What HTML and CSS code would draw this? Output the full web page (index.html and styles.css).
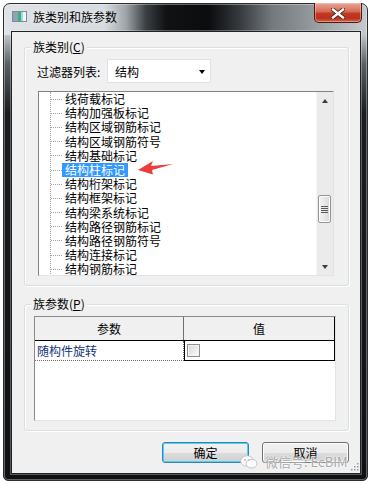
FILE: index.html
```html
<!DOCTYPE html>
<html lang="zh-CN">
<head>
    <meta charset="UTF-8">
    <title>族类别和族参数</title>
    <link rel="stylesheet" href="styles.css">
</head>
<body>
    <div class="window">
        <div class="titlebar">
            <svg class="app-icon" width="15" height="11" viewBox="0 0 15 11">
                <rect x="0.5" y="0.5" width="14" height="10" fill="#f4f6f8" stroke="#7d8c99"/>
                <rect x="1" y="1" width="5" height="9" fill="#8fa3b5"/>
                <rect x="6" y="1" width="3" height="9" fill="#3fae7a"/>
                <rect x="9" y="1" width="2" height="9" fill="#9fd6e8"/>
            </svg>
            <span class="title">族类别和族参数</span>
            <div class="close-btn">
                <svg width="14" height="11" viewBox="0 0 14 11">
                    <path d="M2 1.5 L12 9.5 M12 1.5 L2 9.5" stroke="#4a1a12" stroke-width="4" stroke-linecap="square"/>
                    <path d="M2 1.5 L12 9.5 M12 1.5 L2 9.5" stroke="#ffffff" stroke-width="2.4" stroke-linecap="square"/>
                </svg>
            </div>
        </div>

        <div class="client">
            <div class="group group-category">
                <div class="group-title">族类别(<u>C</u>)</div>

                <div class="filter-row">
                    <span class="filter-label">过滤器列表:</span>
                    <div class="combo">
                        <span>结构</span>
                        <span class="combo-arrow"></span>
                    </div>
                </div>

                <div class="tree">
                    <div class="tree-items">
                        <div class="tree-lines">
                            <div class="node"><span>线荷载标记</span></div>
                            <div class="node"><span>结构加强板标记</span></div>
                            <div class="node"><span>结构区域钢筋标记</span></div>
                            <div class="node"><span>结构区域钢筋符号</span></div>
                            <div class="node"><span>结构基础标记</span></div>
                            <div class="node selected"><span>结构柱标记</span></div>
                            <div class="node"><span>结构桁架标记</span></div>
                            <div class="node"><span>结构框架标记</span></div>
                            <div class="node"><span>结构梁系统标记</span></div>
                            <div class="node"><span>结构路径钢筋标记</span></div>
                            <div class="node"><span>结构路径钢筋符号</span></div>
                            <div class="node"><span>结构连接标记</span></div>
                            <div class="node"><span>结构钢筋标记</span></div>
                        </div>
                    </div>
                    <div class="scrollbar">
                        <div class="scroll-btn"><span class="arrow-up"></span></div>
                        <div class="scroll-track">
                            <div class="scroll-thumb"><span></span><span></span><span></span><span></span></div>
                        </div>
                        <div class="scroll-btn"><span class="arrow-down"></span></div>
                    </div>

                    <!-- annotation arrow -->
                    <svg class="pointer-arrow" width="38" height="17" viewBox="0 0 38 17">
                        <polygon points="1,11 16,2 14,7 36,5 15,11 16,15.5" fill="#ec3d3a"/>
                    </svg>
                </div>
            </div>

            <div class="group group-params">
                <div class="group-title">族参数(<u>P</u>)</div>

                <div class="param-table">
                    <div class="param-row param-head">
                        <div class="cell cell-name">参数</div>
                        <div class="cell cell-value">值</div>
                    </div>
                    <div class="param-row param-item">
                        <div class="cell cell-name">随构件旋转</div>
                        <div class="cell cell-value"><span class="checkbox"></span></div>
                    </div>
                </div>
            </div>

            <div class="dialog-buttons">
                <button class="btn btn-default">确定</button>
                <button class="btn">取消</button>
            </div>

            <div class="watermark">
                <svg width="18" height="14" viewBox="0 0 18 14">
                    <ellipse cx="7" cy="6" rx="6.3" ry="5.2" fill="#ffffff" stroke="#c4c4c4"/>
                    <ellipse cx="11.5" cy="8.6" rx="5.4" ry="4.4" fill="#ffffff" stroke="#c4c4c4"/>
                    <circle cx="5" cy="5" r="0.9" fill="#bdbdbd"/>
                    <circle cx="9" cy="5" r="0.9" fill="#bdbdbd"/>
                </svg>
                <span>微信号: EcBIM</span>
            </div>

            <svg class="size-grip" width="9" height="9" viewBox="0 0 9 9">
                <rect x="7" y="1" width="1.5" height="1.5" fill="#9a9a9a"/>
                <rect x="4" y="4" width="1.5" height="1.5" fill="#9a9a9a"/>
                <rect x="7" y="4" width="1.5" height="1.5" fill="#9a9a9a"/>
                <rect x="1" y="7" width="1.5" height="1.5" fill="#9a9a9a"/>
                <rect x="4" y="7" width="1.5" height="1.5" fill="#9a9a9a"/>
                <rect x="7" y="7" width="1.5" height="1.5" fill="#9a9a9a"/>
            </svg>
        </div>
    </div>
</body>
</html>
```

FILE: styles.css
```css
* {
    margin: 0;
    padding: 0;
    box-sizing: border-box;
}

body {
    width: 369px;
    height: 484px;
    overflow: hidden;
    background: #ffffff;
    font-family: "Noto Sans CJK SC", "Noto Sans", sans-serif;
    font-size: 12px;
    color: #000;
}

/* Aero glass frame */
.window {
    width: 365px;
    height: 478px;
    margin: 3px 0 0 3px;
    padding: 0 6px 6px 7px;
    border: 1px solid #2a2d30;
    border-radius: 7px 7px 5px 5px;
    display: flex;
    flex-direction: column;
    background:
        linear-gradient(90deg, #dfe3e7 0, #d6dbdf 100px, #9ea4a9 122px, #3a3e42 142px, #101214 162px, #0b0c0e 205px, #35393d 235px, #74797e 268px, #8d9297 300px, #b2b7bb 340px, #c8ccd0 365px) top / 100% 31px no-repeat,
        linear-gradient(180deg, #c3c8cc 30px, #5a5f63 60px, #1a1c1e 110px, #0e1012 100%);
    box-shadow: inset 0 0 0 1px rgba(255, 255, 255, 0.35);
}

.titlebar {
    height: 27px;
    display: flex;
    align-items: center;
    padding-bottom: 2px;
}

.app-icon {
    margin-left: 1px;
    flex-shrink: 0;
}

.title {
    margin-left: 6px;
    line-height: 14px;
    color: #000;
    text-shadow: 0 0 6px rgba(255, 255, 255, 0.8);
}

.close-btn {
    margin-left: auto;
    margin-right: -1px;
    align-self: flex-start;
    margin-top: -1px;
    width: 48px;
    height: 20px;
    border: 1px solid #4d1a12;
    border-top: none;
    border-radius: 0 0 5px 5px;
    background: linear-gradient(180deg, #e8a898 0, #d66b55 45%, #c13a22 55%, #b8321c 80%, #d2664a 100%);
    box-shadow: inset 0 0 0 1px rgba(255, 210, 200, 0.45);
    display: flex;
    align-items: center;
    justify-content: center;
    padding-top: 1px;
}

/* Dialog client area */
.client {
    position: relative;
    flex: 1;
    background: #f0f0f0;
    border: 1px solid #202325;
    box-shadow: 0 0 0 1px rgba(255, 255, 255, 0.3);
    padding: 0 11px 0 12px;
}

.group {
    border: 1px solid #d5dfe5;
    border-radius: 3px;
    box-shadow: inset 1px 1px 0 #fff, 1px 1px 0 #fff;
    padding-bottom: 9px;
}

.group-category {
    margin-top: 15px;
}

.group-params {
    margin-top: 18px;
}

.group-title {
    width: fit-content;
    height: 14px;
    line-height: 14px;
    margin: -8px 0 0 6px;
    padding: 0 2px;
    background: #f0f0f0;
}

.filter-row {
    display: flex;
    align-items: center;
    margin-top: 5px;
    padding-left: 12px;
}

.filter-label {
    width: 70px;
}

.combo {
    width: 104px;
    height: 24px;
    display: flex;
    align-items: center;
    justify-content: space-between;
    padding: 0 5px 0 7px;
    background: #fff;
    border: 1px solid #dde2e8;
}

.combo-arrow {
    width: 0;
    height: 0;
    border-left: 3.5px solid transparent;
    border-right: 3.5px solid transparent;
    border-top: 4px solid #000;
    margin-top: 1px;
}

/* Tree list */
.tree {
    position: relative;
    display: flex;
    width: 296px;
    height: 185px;
    margin: 8px 0 0 13px;
    background: #fff;
    border: 1px solid;
    border-color: #828282 #e3e3e3 #e3e3e3 #828282;
}

.tree-items {
    flex: 1;
    overflow: hidden;
}

.tree-lines {
    margin-left: 11px;
    border-left: 1px dotted #a0a0a0;
}

.node {
    height: 14.2px;
    display: flex;
    align-items: center;
}

.node::before {
    content: "";
    width: 11px;
    border-top: 1px dotted #a0a0a0;
}

.node span {
    display: block;
    height: 14px;
    padding: 0 3px;
    line-height: 14px;
    white-space: nowrap;
}

.node.selected span {
    background: #3399ff;
    color: #fff;
}

.scrollbar {
    width: 17px;
    display: flex;
    flex-direction: column;
    background: #ebebeb;
    border-left: 1px solid #f5f5f5;
}

.scroll-btn {
    height: 17px;
    display: flex;
    align-items: center;
    justify-content: center;
}

.arrow-up,
.arrow-down {
    width: 0;
    height: 0;
    border-left: 3.5px solid transparent;
    border-right: 3.5px solid transparent;
}

.arrow-up {
    border-bottom: 4px solid #3c3c3c;
}

.arrow-down {
    border-top: 4px solid #3c3c3c;
}

.scroll-track {
    flex: 1;
}

.scroll-thumb {
    width: 13px;
    height: 28px;
    margin: 86px 0 0 1px;
    border: 1px solid #959595;
    border-radius: 2px;
    background: linear-gradient(90deg, #f3f3f3 0, #e8e8e8 50%, #d6d6d6 100%);
    box-shadow: inset 0 0 0 1px #fbfbfb;
    display: flex;
    flex-direction: column;
    align-items: center;
    justify-content: center;
    gap: 1px;
}

.scroll-thumb span {
    width: 7px;
    height: 1px;
    background: #5a5a5a;
}

.pointer-arrow {
    position: absolute;
    left: 98px;
    top: 67px;
}

/* Parameter table */
.param-table {
    width: 302px;
    height: 105px;
    margin: 5px 0 0 9px;
    background: #fff;
    border: 1px solid;
    border-color: #8a8a8a #e3e3e3 #e3e3e3 #8a8a8a;
}

.param-row {
    display: flex;
}

.param-head {
    height: 24px;
    background: #f0f0f0;
    border-bottom: 1px solid #000;
}

.param-head .cell {
    display: flex;
    align-items: center;
    justify-content: center;
}

.param-head .cell-name {
    border-right: 1px solid #6e6e6e;
}

.param-head .cell-value {
    border-right: 1px solid #000;
}

.cell-name {
    width: 149px;
}

.cell-value {
    width: 151px;
}

.param-item {
    height: 20px;
}

.param-item .cell-name {
    padding-left: 2px;
    line-height: 19px;
    border-right: 1px dotted #6e6e6e;
    border-bottom: 1px dotted #6e6e6e;
    color: #10357a;
}

.param-item .cell-value {
    display: flex;
    align-items: center;
    padding-left: 2px;
    border: 1px solid #000;
    border-top: none;
}

.checkbox {
    width: 13px;
    height: 13px;
    border: 1px solid #8e8f8f;
    background: linear-gradient(135deg, #d6d6d6 0, #f2f2f2 70%, #ffffff 100%);
    box-shadow: inset 0 0 0 1px #f4f4f4;
}

/* Buttons */
.dialog-buttons {
    display: flex;
    justify-content: flex-end;
    gap: 13px;
    margin-top: 11px;
}

.btn {
    width: 87px;
    height: 21px;
    border: 1px solid #707070;
    border-radius: 3px;
    background: linear-gradient(180deg, #f2f2f2 0, #ebebeb 50%, #dddddd 51%, #cfcfcf 100%);
    box-shadow: inset 0 0 0 1px #fcfcfc;
    font-family: "Noto Sans CJK SC", "Noto Sans", sans-serif;
    font-size: 12px;
    color: #000;
    line-height: 17px;
}

.btn-default {
    border-color: #3c7fb1;
    box-shadow: inset 0 0 0 1px #48d4fb;
}

/* Watermark over the buttons */
.watermark {
    position: absolute;
    left: 228px;
    top: 421px;
    display: flex;
    align-items: center;
    gap: 7px;
    font-size: 13px;
    line-height: 17px;
    color: rgba(140, 140, 140, 0.75);
    text-shadow: 0 0 2px #fff, 0 0 2px #fff;
}

.size-grip {
    position: absolute;
    right: 1px;
    bottom: 2px;
}
```
